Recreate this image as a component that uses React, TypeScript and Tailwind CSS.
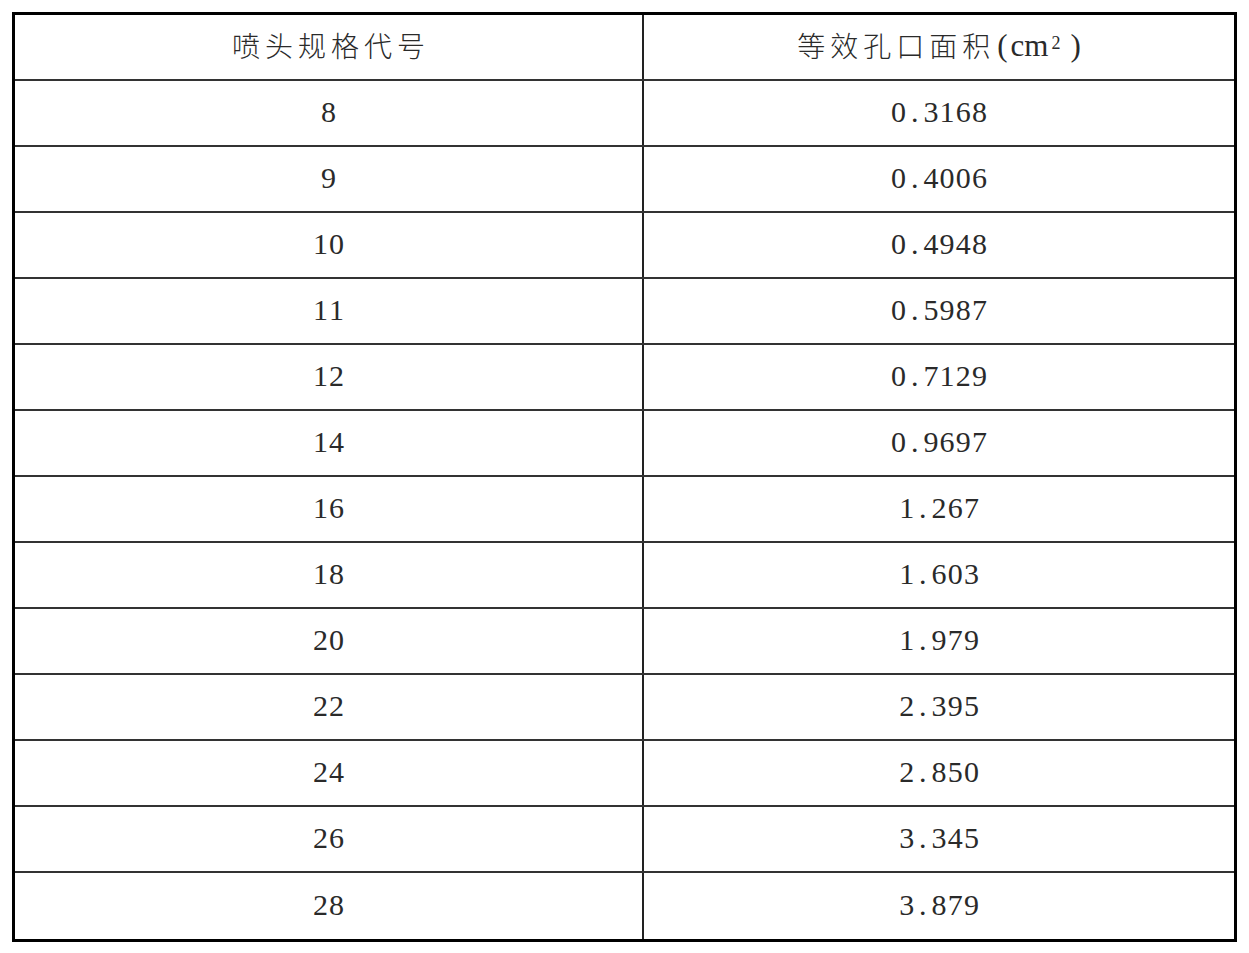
const rows: [string, string][] = [
  ["8", "0.3168"],
  ["9", "0.4006"],
  ["10", "0.4948"],
  ["11", "0.5987"],
  ["12", "0.7129"],
  ["14", "0.9697"],
  ["16", "1.267"],
  ["18", "1.603"],
  ["20", "1.979"],
  ["22", "2.395"],
  ["24", "2.850"],
  ["26", "3.345"],
  ["28", "3.879"],
];

// digits in the source are set on a fixed pitch, period included
function Num({ value }: { value: string }) {
  return (
    <span className="inline-flex pb-[4px]">
      {value.split("").map((c, i) => (
        <span key={i} className="inline-block w-[16.2px] text-center">
          {c}
        </span>
      ))}
    </span>
  );
}

export default function App() {
  return (
    <div className="w-[1249px] h-[953px] bg-white pt-[12px] pl-[12px]">
      <div className="w-[1225px] h-[930px] border-[3px] border-black flex flex-col text-[#2a2a2a] font-['Liberation_Serif','Noto_Sans_CJK_SC',serif]">
        {/* Header */}
        <div className="h-[66px] flex border-b-2 border-[#333]">
          <div className="w-[629px] border-r-2 border-[#222] flex items-center justify-center pb-[4px] text-[28px] tracking-[5px] font-['Noto_Sans_CJK_SC',sans-serif] font-light pl-[5px]">
            喷头规格代号
          </div>
          <div className="flex-1 flex items-center justify-center pb-[4px]">
            <span className="text-[28px] tracking-[5px] font-['Noto_Sans_CJK_SC',sans-serif] font-light">
              等效孔口面积
            </span>
            <span className="text-[31px] leading-none font-['Liberation_Serif',serif] flex items-baseline">
              <span className="ml-[2px] mr-[3px]">(</span>
              <span>cm</span>
              <sup className="text-[18px] leading-none -top-[7px] ml-[3px]">2</sup>
              <span className="ml-[10px]">)</span>
            </span>
          </div>
        </div>

        {rows.map(([code, area], i) => (
          <div
            key={code}
            className={
              i === rows.length - 1
                ? "h-[66px] flex"
                : "h-[66px] flex border-b-2 border-[#333]"
            }
          >
            <div className="w-[629px] border-r-2 border-[#222] flex items-center justify-center text-[30px]">
              <Num value={code} />
            </div>
            <div className="flex-1 flex items-center justify-center text-[30px]">
              <Num value={area} />
            </div>
          </div>
        ))}
      </div>
    </div>
  );
}
